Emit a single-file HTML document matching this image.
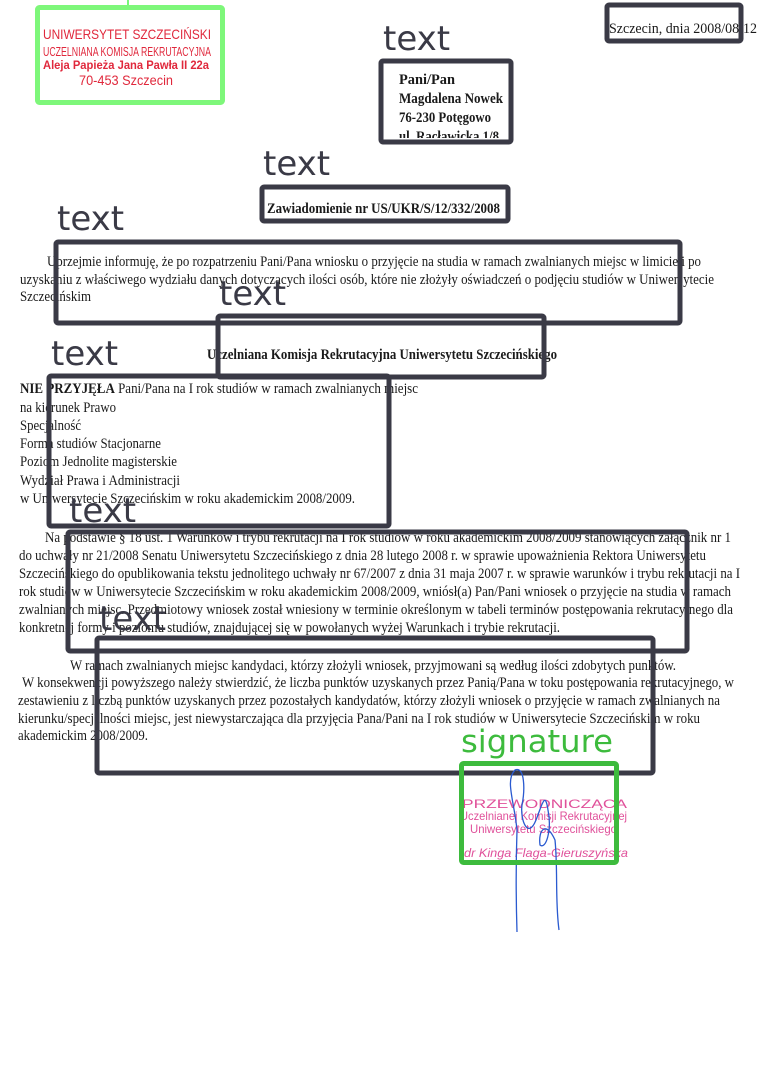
<!DOCTYPE html>
<html><head><meta charset="utf-8"><style>
html,body{margin:0;padding:0;background:#fff;}
svg{display:block;}
.b{font-family:"Liberation Serif",serif;font-size:15px;fill:#1a1a1a;}
.bb{font-family:"Liberation Serif",serif;font-size:15px;font-weight:bold;fill:#1a1a1a;}
.lab{font-family:"DejaVu Sans","Liberation Sans",sans-serif;font-size:34px;fill:#3a3a46;}
.red{font-family:"Liberation Sans",sans-serif;fill:#e0283c;}
.pink{font-family:"Liberation Sans",sans-serif;fill:#e0509a;font-size:12px;}
.box{fill:none;stroke:#3a3a46;stroke-width:5;}
</style></head><body>
<svg width="768" height="1077" viewBox="0 0 768 1077" xmlns="http://www.w3.org/2000/svg">
<rect width="768" height="1077" fill="#fff"/>
<!-- stamp -->
<line x1="128" y1="0" x2="128" y2="6" stroke="#77f777" stroke-width="2"/>
<rect x="37.5" y="7.5" width="185" height="95" fill="none" stroke="#7ef77a" stroke-width="5" rx="2"/>
<text class="red" x="43" y="39" font-size="14" textLength="168" lengthAdjust="spacingAndGlyphs" font-family="Liberation Serif">UNIWERSYTET SZCZECIŃSKI</text>
<text class="red" x="43" y="56" font-size="13" textLength="168" lengthAdjust="spacingAndGlyphs">UCZELNIANA KOMISJA REKRUTACYJNA</text>
<text class="red" x="43" y="69" font-size="12" font-weight="bold" textLength="166" lengthAdjust="spacingAndGlyphs">Aleja Papieża Jana Pawła II 22a</text>
<text class="red" x="79" y="85" font-size="14" textLength="94" lengthAdjust="spacingAndGlyphs">70-453 Szczecin</text>
<!-- date -->
<text class="b" x="609" y="33" font-size="16" textLength="148" lengthAdjust="spacingAndGlyphs">Szczecin, dnia 2008/08/12</text>
<rect class="box" x="607" y="5" width="134" height="36" rx="2"/>
<!-- address -->
<text class="lab" x="383" y="50">text</text>
<text class="bb" x="399" y="84" textLength="56" lengthAdjust="spacingAndGlyphs">Pani/Pan</text>
<text class="bb" x="399" y="103" textLength="104" lengthAdjust="spacingAndGlyphs">Magdalena Nowek</text>
<text class="bb" x="399" y="122" textLength="92" lengthAdjust="spacingAndGlyphs">76-230 Potęgowo</text>
<text class="bb" x="399" y="141" textLength="100" lengthAdjust="spacingAndGlyphs">ul. Racławicka 1/8</text>
<rect x="383" y="138" width="128" height="8" fill="#fff"/>
<rect class="box" x="381" y="61" width="130" height="81" rx="2"/>
<!-- zawiadomienie -->
<text class="lab" x="263" y="175">text</text>
<text class="bb" x="267" y="213" font-size="14" textLength="233" lengthAdjust="spacingAndGlyphs">Zawiadomienie nr US/UKR/S/12/332/2008</text>
<rect class="box" x="262" y="187" width="246" height="34" rx="2"/>
<!-- para1 -->
<text class="lab" x="57" y="230">text</text>
<text class="b" x="47" y="266" textLength="654" lengthAdjust="spacingAndGlyphs">Uprzejmie informuję, że po rozpatrzeniu Pani/Pana wniosku o przyjęcie na studia w ramach zwalnianych miejsc w limicie i po</text>
<text class="b" x="20" y="284" textLength="694" lengthAdjust="spacingAndGlyphs">uzyskaniu z właściwego wydziału danych dotyczących ilości osób, które nie złożyły oświadczeń o podjęciu studiów w Uniwersytecie</text>
<text class="b" x="20" y="301" textLength="71" lengthAdjust="spacingAndGlyphs">Szczecińskim</text>
<rect class="box" x="56" y="242" width="624" height="81" rx="2"/>
<!-- heading -->
<text class="lab" x="219" y="305">text</text>
<text class="bb" x="207" y="359" font-size="14" textLength="350" lengthAdjust="spacingAndGlyphs">Uczelniana Komisja Rekrutacyjna Uniwersytetu Szczecińskiego</text>
<rect class="box" x="218" y="316" width="326" height="61" rx="2"/>
<!-- NIE PRZYJELA -->
<text class="lab" x="51" y="365">text</text>
<text class="b" x="20" y="393" textLength="398" lengthAdjust="spacingAndGlyphs"><tspan font-weight="bold">NIE PRZYJĘŁA</tspan>  Pani/Pana na I rok studiów w ramach zwalnianych miejsc</text>
<text class="b" x="20" y="412" textLength="96" lengthAdjust="spacingAndGlyphs">na kierunek Prawo</text>
<text class="b" x="20" y="430" textLength="61" lengthAdjust="spacingAndGlyphs">Specjalność</text>
<text class="b" x="20" y="448" textLength="141" lengthAdjust="spacingAndGlyphs">Forma studiów Stacjonarne</text>
<text class="b" x="20" y="466" textLength="157" lengthAdjust="spacingAndGlyphs">Poziom Jednolite magisterskie</text>
<text class="b" x="20" y="485" textLength="160" lengthAdjust="spacingAndGlyphs">Wydział Prawa i Administracji</text>
<text class="b" x="20" y="503" textLength="335" lengthAdjust="spacingAndGlyphs">w Uniwersytecie Szczecińskim w roku akademickim 2008/2009.</text>
<rect class="box" x="49" y="376" width="340" height="150" rx="2"/>
<!-- para2 -->
<text class="lab" x="69" y="522">text</text>
<text class="b" x="45" y="542" textLength="686" lengthAdjust="spacingAndGlyphs">Na podstawie § 18 ust. 1 Warunków i trybu rekrutacji na I rok studiów w roku akademickim 2008/2009 stanowiących załącznik nr 1</text>
<text class="b" x="19" y="560" textLength="687" lengthAdjust="spacingAndGlyphs">do uchwały nr 21/2008 Senatu Uniwersytetu Szczecińskiego z dnia 28 lutego 2008 r. w sprawie upoważnienia Rektora Uniwersytetu</text>
<text class="b" x="19" y="578" textLength="721" lengthAdjust="spacingAndGlyphs">Szczecińskiego do opublikowania tekstu jednolitego uchwały nr 67/2007 z dnia 31 maja 2007 r. w sprawie warunków i trybu rekrutacji na I</text>
<text class="b" x="19" y="596" textLength="712" lengthAdjust="spacingAndGlyphs">rok studiów w Uniwersytecie Szczecińskim w roku akademickim 2008/2009, wniósł(a) Pan/Pani wniosek o przyjęcie na studia w ramach</text>
<text class="b" x="19" y="614" textLength="714" lengthAdjust="spacingAndGlyphs">zwalnianych miejsc. Przedmiotowy wniosek został wniesiony w terminie określonym w tabeli terminów postępowania rekrutacyjnego dla</text>
<text class="b" x="19" y="632" textLength="541" lengthAdjust="spacingAndGlyphs">konkretnej formy i poziomu studiów, znajdującej się w powołanych wyżej Warunkach i trybie rekrutacji.</text>
<rect class="box" x="68" y="532" width="619" height="119" rx="2"/>
<!-- para3 -->
<text class="lab" x="99" y="630">text</text>
<text class="b" x="70" y="670" textLength="606" lengthAdjust="spacingAndGlyphs">W ramach zwalnianych miejsc kandydaci, którzy złożyli wniosek, przyjmowani są według ilości zdobytych punktów.</text>
<text class="b" x="22" y="687" textLength="712" lengthAdjust="spacingAndGlyphs">W konsekwencji powyższego należy stwierdzić, że liczba punktów uzyskanych przez Panią/Pana w toku postępowania rekrutacyjnego, w</text>
<text class="b" x="18" y="705" textLength="702" lengthAdjust="spacingAndGlyphs">zestawieniu z liczbą punktów uzyskanych przez pozostałych kandydatów, którzy złożyli wniosek o przyjęcie w ramach zwalnianych na</text>
<text class="b" x="18" y="723" textLength="682" lengthAdjust="spacingAndGlyphs">kierunku/specjalności miejsc, jest niewystarczająca dla przyjęcia Pana/Pani na I rok studiów w Uniwersytecie Szczecińskim w roku</text>
<text class="b" x="18" y="740" textLength="130" lengthAdjust="spacingAndGlyphs">akademickim 2008/2009.</text>
<rect class="box" x="97" y="638" width="556" height="135" rx="2"/>
<!-- signature -->
<text x="461" y="752" font-family="DejaVu Sans,sans-serif" font-size="31" fill="#3dbb3d" textLength="152" lengthAdjust="spacingAndGlyphs">signature</text>
<text class="pink" x="462" y="808" font-family="Liberation Serif" font-size="14" textLength="165" lengthAdjust="spacingAndGlyphs">PRZEWODNICZĄCA</text>
<text class="pink" x="460" y="820" textLength="167" lengthAdjust="spacingAndGlyphs">Uczelnianej Komisji Rekrutacyjnej</text>
<text class="pink" x="470" y="833" textLength="147" lengthAdjust="spacingAndGlyphs">Uniwersytetu Szczecińskiego</text>
<text class="pink" x="464" y="857" font-style="italic" font-size="13" textLength="164" lengthAdjust="spacingAndGlyphs">dr Kinga Flaga-Gieruszyńska</text>
<path d="M517 932 C516 900 516 860 517 830 C514 800 505 780 515 770 C525 766 525 790 522 805 C520 820 528 840 536 820 C542 805 545 790 548 810 C552 830 546 850 540 845 C538 830 546 820 555 840 C558 870 555 900 559 930" fill="none" stroke="#2a5ad0" stroke-width="1.3"/>
<rect x="461.5" y="763.5" width="155" height="99" fill="none" stroke="#3dbb3d" stroke-width="5" rx="2"/>
</svg>
</body></html>
